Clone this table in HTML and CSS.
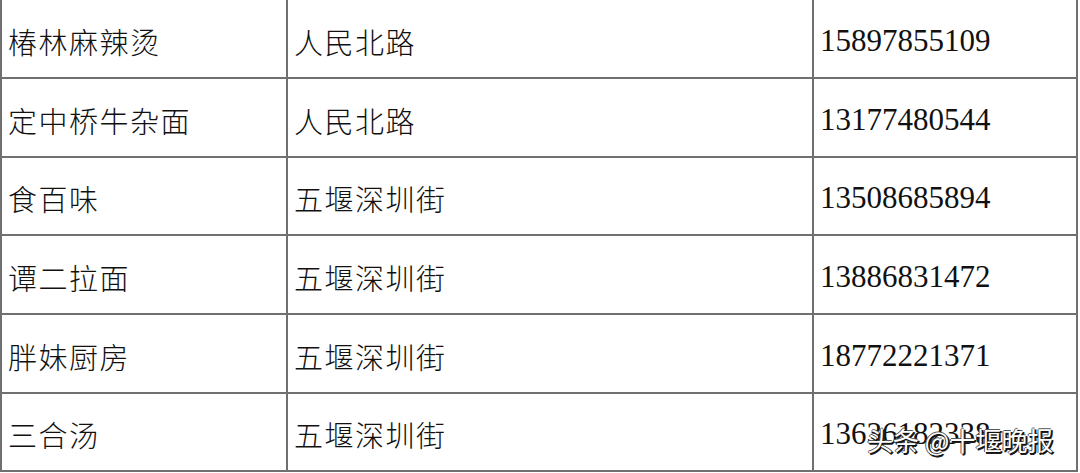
FILE: index.html
```html
<!DOCTYPE html>
<html lang="zh">
<head>
<meta charset="utf-8">
<link rel="stylesheet" href="styles.css">
</head>
<body>
<div class="page">
  <div class="table">
    <div class="cell name">椿林麻辣烫</div>
    <div class="cell addr">人民北路</div>
    <div class="cell tel">15897855109</div>
    <div class="cell name">定中桥牛杂面</div>
    <div class="cell addr">人民北路</div>
    <div class="cell tel">13177480544</div>
    <div class="cell name">食百味</div>
    <div class="cell addr">五堰深圳街</div>
    <div class="cell tel">13508685894</div>
    <div class="cell name">谭二拉面</div>
    <div class="cell addr">五堰深圳街</div>
    <div class="cell tel">13886831472</div>
    <div class="cell name">胖妹厨房</div>
    <div class="cell addr">五堰深圳街</div>
    <div class="cell tel">18772221371</div>
    <div class="cell name">三合汤</div>
    <div class="cell addr">五堰深圳街</div>
    <div class="cell tel">13636182338</div>
  </div>
  <div class="watermark">头条 @十堰晚报</div>
</div>
</body>
</html>
```
FILE: styles.css
```css
html, body {
  margin: 0;
  padding: 0;
  background: #ffffff;
}
.page {
  position: relative;
  width: 1080px;
  height: 473px;
  overflow: hidden;
}
.table {
  display: grid;
  width: 1078px;
  box-sizing: border-box;
  grid-template-columns: 284px 524px 262px;
  grid-template-rows: 77px 77px 76px 77px 77px 76px;
  gap: 2px;
  padding: 0 2px 2px 2px;
  background: #707070;
}
.cell {
  background: #ffffff;
  display: flex;
  align-items: center;
  padding: 4px 0 0 6px;
  box-sizing: border-box;
  color: #111111;
}
.name, .addr {
  font-family: "Noto Sans CJK SC", sans-serif;
  font-weight: 300;
  font-size: 29px;
  letter-spacing: 1.5px;
}
.tel {
  font-family: "Liberation Serif", serif;
  font-size: 31px;
  letter-spacing: 0;
}
.watermark {
  position: absolute;
  left: 867px;
  top: 421px;
  font-family: "Noto Sans CJK SC", sans-serif;
  font-size: 26px;
  color: #ffffff;
  text-shadow: 1px 1px 0 #111, 2px 1px 0 #222, 1px 2px 0 #222, -1px 0 0 #555, 0 -1px 0 #555;
  white-space: nowrap;
}
```
